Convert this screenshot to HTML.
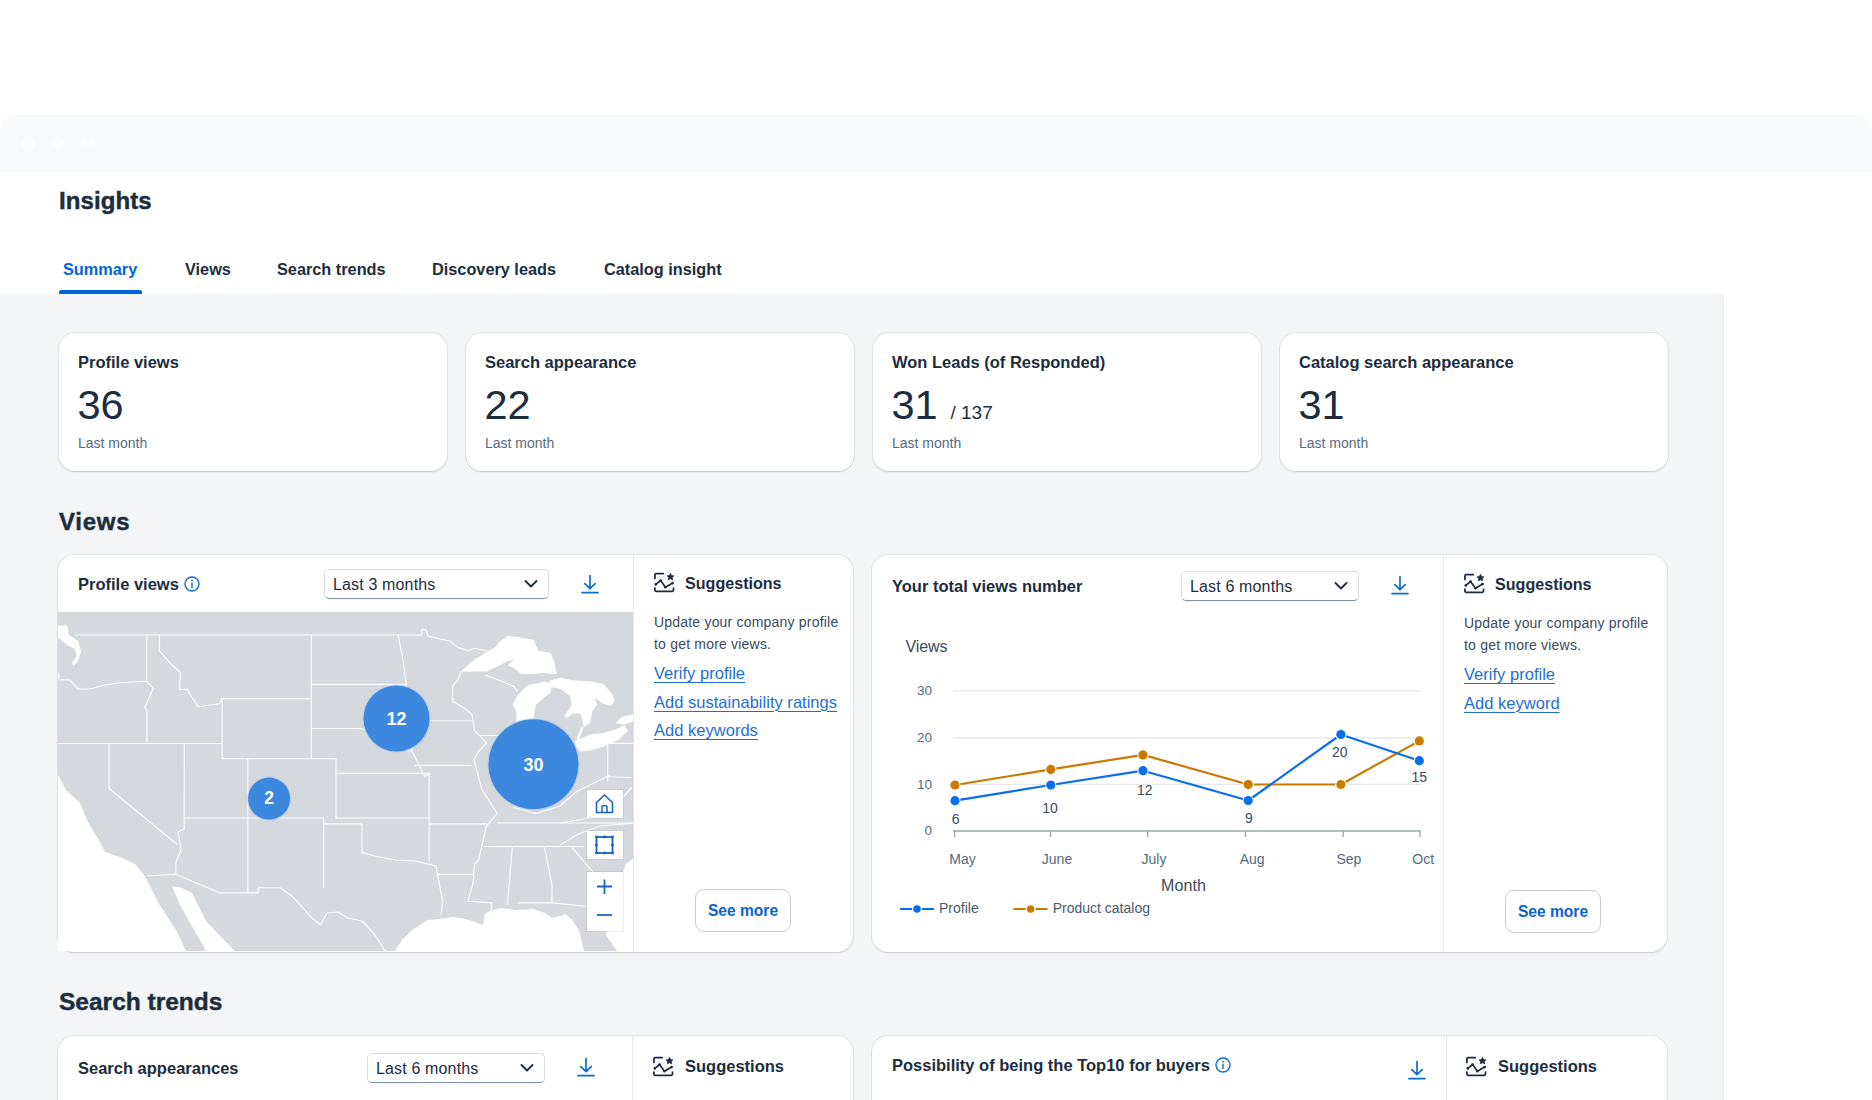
<!DOCTYPE html>
<html><head><meta charset="utf-8"><style>
html,body{margin:0;padding:0;}
body{width:1872px;height:1100px;overflow:hidden;position:relative;background:#fff;font-family:"Liberation Sans", sans-serif;}
.t{position:absolute;line-height:1;white-space:nowrap;}
</style></head><body>
<div style="position:absolute;left:0px;top:115px;width:1872px;height:57px;background:#f8f9fa;border-radius:17px 17px 0 0;"></div>
<div style="position:absolute;left:21px;top:136px;width:14px;height:14px;background:#fbfcfd;border-radius:50%;"></div>
<div style="position:absolute;left:51px;top:136px;width:14px;height:14px;background:#fbfcfd;border-radius:50%;"></div>
<div style="position:absolute;left:81px;top:136px;width:14px;height:14px;background:#fbfcfd;border-radius:50%;"></div>
<div class="t" style="left:59.0px;top:188.7px;font-size:24px;font-weight:700;color:#1d2d3e;letter-spacing:0.1px;-webkit-text-stroke:0.45px #1d2d3e;">Insights</div>
<div class="t" style="left:63.0px;top:260.7px;font-size:16.3px;font-weight:700;color:#0064d9;width:79px;">Summary</div>
<div class="t" style="left:185.0px;top:260.7px;font-size:16.3px;font-weight:700;color:#1d2d3e;width:49px;">Views</div>
<div class="t" style="left:277.0px;top:260.7px;font-size:16.3px;font-weight:700;color:#1d2d3e;width:112px;">Search trends</div>
<div class="t" style="left:432.0px;top:260.7px;font-size:16.3px;font-weight:700;color:#1d2d3e;width:129px;">Discovery leads</div>
<div class="t" style="left:604.0px;top:260.7px;font-size:16.3px;font-weight:700;color:#1d2d3e;width:123px;">Catalog insight</div>
<div style="position:absolute;left:59px;top:290px;width:83px;height:4px;background:#0064d9;border-radius:2px 2px 0 0;"></div>
<div style="position:absolute;left:0px;top:294px;width:1723px;height:806px;background:#f4f5f7;border-right:1px solid #eaecee;"></div>
<div style="position:absolute;left:58.5px;top:333px;width:388px;height:138px;background:#fff;border-radius:16px;box-shadow:0 0 0 1px rgba(0,0,0,0.06),0 1px 2px rgba(0,0,0,0.12);"></div>
<div class="t" style="left:78.0px;top:353.5px;font-size:16.5px;font-weight:700;color:#1d2d3e;">Profile views</div>
<div class="t" style="left:77.5px;top:384.1px;font-size:41.5px;font-weight:400;color:#1d2d3e;">36</div>
<div class="t" style="left:78.0px;top:435.6px;font-size:14px;font-weight:400;color:#556b82;">Last month</div>
<div style="position:absolute;left:465.5px;top:333px;width:388px;height:138px;background:#fff;border-radius:16px;box-shadow:0 0 0 1px rgba(0,0,0,0.06),0 1px 2px rgba(0,0,0,0.12);"></div>
<div class="t" style="left:485.0px;top:353.5px;font-size:16.5px;font-weight:700;color:#1d2d3e;">Search appearance</div>
<div class="t" style="left:484.5px;top:384.1px;font-size:41.5px;font-weight:400;color:#1d2d3e;">22</div>
<div class="t" style="left:485.0px;top:435.6px;font-size:14px;font-weight:400;color:#556b82;">Last month</div>
<div style="position:absolute;left:872.5px;top:333px;width:388px;height:138px;background:#fff;border-radius:16px;box-shadow:0 0 0 1px rgba(0,0,0,0.06),0 1px 2px rgba(0,0,0,0.12);"></div>
<div class="t" style="left:892.0px;top:353.5px;font-size:16.5px;font-weight:700;color:#1d2d3e;">Won Leads (of Responded)</div>
<div class="t" style="left:891.5px;top:384.1px;font-size:41.5px;font-weight:400;color:#1d2d3e;">31</div>
<div class="t" style="left:950.5px;top:403.4px;font-size:19px;font-weight:400;color:#1d2d3e;">/ 137</div>
<div class="t" style="left:892.0px;top:435.6px;font-size:14px;font-weight:400;color:#556b82;">Last month</div>
<div style="position:absolute;left:1279.5px;top:333px;width:388px;height:138px;background:#fff;border-radius:16px;box-shadow:0 0 0 1px rgba(0,0,0,0.06),0 1px 2px rgba(0,0,0,0.12);"></div>
<div class="t" style="left:1299.0px;top:353.5px;font-size:16.5px;font-weight:700;color:#1d2d3e;">Catalog search appearance</div>
<div class="t" style="left:1298.5px;top:384.1px;font-size:41.5px;font-weight:400;color:#1d2d3e;">31</div>
<div class="t" style="left:1299.0px;top:435.6px;font-size:14px;font-weight:400;color:#556b82;">Last month</div>
<div class="t" style="left:59.0px;top:509.7px;font-size:24px;font-weight:700;color:#1d2d3e;letter-spacing:0.75px;-webkit-text-stroke:0.45px #1d2d3e;">Views</div>
<div class="t" style="left:59.0px;top:990.3px;font-size:24.5px;font-weight:700;color:#1d2d3e;-webkit-text-stroke:0.45px #1d2d3e;">Search trends</div>
<div style="position:absolute;left:58px;top:555px;width:795px;height:397px;background:#fff;border-radius:16px;box-shadow:0 0 0 1px rgba(0,0,0,0.06),0 1px 2px rgba(0,0,0,0.12);overflow:hidden;"></div>
<div style="position:absolute;left:872px;top:555px;width:795px;height:397px;background:#fff;border-radius:16px;box-shadow:0 0 0 1px rgba(0,0,0,0.06),0 1px 2px rgba(0,0,0,0.12);"></div>
<div style="position:absolute;left:633px;top:555px;width:1px;height:397px;background:#e5e7ea;"></div>
<div style="position:absolute;left:1443px;top:555px;width:1px;height:397px;background:#e5e7ea;"></div>
<div class="t" style="left:78.0px;top:575.7px;font-size:16.5px;font-weight:700;color:#1d2d3e;">Profile views</div>
<svg style="position:absolute;left:182.5px;top:574.5px" width="18" height="18" viewBox="0 0 18 18"><circle cx="9" cy="9" r="7.0" fill="none" stroke="#0a6ed1" stroke-width="1.4"/><circle cx="9" cy="5.6" r="0.95" fill="#0a6ed1"/><rect x="8.3" y="7.6" width="1.4" height="5.4" fill="#0a6ed1"/></svg>
<div style="position:absolute;left:324px;top:569px;width:225px;height:30px;box-sizing:border-box;background:#fff;border:1px solid #d9dde2;border-bottom:1.5px solid #8396a8;border-radius:5px;box-shadow:0 1px 1px rgba(0,0,0,0.05)"></div>
<div class="t" style="left:333.0px;top:576.5px;font-size:16px;font-weight:400;color:#1d2d3e;letter-spacing:0.15px;">Last 3 months</div>
<svg style="position:absolute;left:524px;top:579px" width="14" height="10" viewBox="0 0 14 10"><path d="M1.5 2 L7 7.5 L12.5 2" fill="none" stroke="#1d2d3e" stroke-width="1.8" stroke-linecap="round" stroke-linejoin="round"/></svg>
<svg style="position:absolute;left:580px;top:574px" width="20" height="20" viewBox="0 0 20 20"><path d="M10 1.5 V14.5 M4.8 9.6 L10 14.6 L15.2 9.6" fill="none" stroke="#0a6ed1" stroke-width="1.7" stroke-linecap="round" stroke-linejoin="round"/><path d="M2 18.6 H18" stroke="#0a6ed1" stroke-width="1.7" stroke-linecap="round"/></svg>
<div class="t" style="left:892.0px;top:578.0px;font-size:16.5px;font-weight:700;color:#1d2d3e;">Your total views number</div>
<div style="position:absolute;left:1181px;top:571px;width:178px;height:30px;box-sizing:border-box;background:#fff;border:1px solid #d9dde2;border-bottom:1.5px solid #8396a8;border-radius:5px;box-shadow:0 1px 1px rgba(0,0,0,0.05)"></div>
<div class="t" style="left:1190.0px;top:578.5px;font-size:16px;font-weight:400;color:#1d2d3e;letter-spacing:0.15px;">Last 6 months</div>
<svg style="position:absolute;left:1334px;top:581px" width="14" height="10" viewBox="0 0 14 10"><path d="M1.5 2 L7 7.5 L12.5 2" fill="none" stroke="#1d2d3e" stroke-width="1.8" stroke-linecap="round" stroke-linejoin="round"/></svg>
<svg style="position:absolute;left:1390px;top:575px" width="20" height="20" viewBox="0 0 20 20"><path d="M10 1.5 V14.5 M4.8 9.6 L10 14.6 L15.2 9.6" fill="none" stroke="#0a6ed1" stroke-width="1.7" stroke-linecap="round" stroke-linejoin="round"/><path d="M2 18.6 H18" stroke="#0a6ed1" stroke-width="1.7" stroke-linecap="round"/></svg>
<svg style="position:absolute;left:654px;top:572px" width="22" height="22" viewBox="0 0 22 22"><path d="M0.9 6.4 V2.9 Q0.9 1.7 2.1 1.7 H9.2" fill="none" stroke="#1d2d3e" stroke-width="1.75" stroke-linecap="round"/><path d="M0.9 16 V18.1 Q0.9 19.3 2.1 19.3 H18.3 Q19.5 19.3 19.5 18.1 V16" fill="none" stroke="#1d2d3e" stroke-width="1.75" stroke-linecap="round"/><path d="M1.8 12.4 L6.6 8.5 L11.4 15.3 L18.6 11.1" fill="none" stroke="#1d2d3e" stroke-width="1.75" stroke-linecap="round" stroke-linejoin="round"/><circle cx="1.8" cy="12.4" r="1.3" fill="#1d2d3e"/><circle cx="6.6" cy="8.5" r="1.3" fill="#1d2d3e"/><circle cx="11.4" cy="15.3" r="1.3" fill="#1d2d3e"/><circle cx="18.6" cy="11.1" r="1.3" fill="#1d2d3e"/><path d="M16.5 1.4 L17.6 3.6 L19.9 3.9 L18.2 5.5 L18.6 7.8 L16.5 6.7 L14.4 7.8 L14.8 5.5 L13.1 3.9 L15.4 3.6 Z" fill="#1d2d3e" stroke="#1d2d3e" stroke-width="0.8" stroke-linejoin="round"/></svg>
<div class="t" style="left:685.0px;top:575.4px;font-size:16.1px;font-weight:700;color:#1d2d3e;">Suggestions</div>
<div class="t" style="left:654.0px;top:614.7px;font-size:14px;font-weight:400;color:#3a4a5c;letter-spacing:0.2px;">Update your company profile</div>
<div class="t" style="left:654.0px;top:636.5px;font-size:14px;font-weight:400;color:#3a4a5c;letter-spacing:0.2px;">to get more views.</div>
<div class="t" style="left:654px;top:665.0px;font-size:16.5px;letter-spacing:0.02px;color:#1f6fd0;text-decoration:underline;text-underline-offset:2.5px;text-decoration-thickness:1.2px;white-space:nowrap">Verify profile</div>
<div class="t" style="left:654px;top:693.7px;font-size:16.5px;letter-spacing:0.02px;color:#1f6fd0;text-decoration:underline;text-underline-offset:2.5px;text-decoration-thickness:1.2px;white-space:nowrap">Add sustainability ratings</div>
<div class="t" style="left:654px;top:722.4px;font-size:16.5px;letter-spacing:0.02px;color:#1f6fd0;text-decoration:underline;text-underline-offset:2.5px;text-decoration-thickness:1.2px;white-space:nowrap">Add keywords</div>
<svg style="position:absolute;left:1464px;top:573px" width="22" height="22" viewBox="0 0 22 22"><path d="M0.9 6.4 V2.9 Q0.9 1.7 2.1 1.7 H9.2" fill="none" stroke="#1d2d3e" stroke-width="1.75" stroke-linecap="round"/><path d="M0.9 16 V18.1 Q0.9 19.3 2.1 19.3 H18.3 Q19.5 19.3 19.5 18.1 V16" fill="none" stroke="#1d2d3e" stroke-width="1.75" stroke-linecap="round"/><path d="M1.8 12.4 L6.6 8.5 L11.4 15.3 L18.6 11.1" fill="none" stroke="#1d2d3e" stroke-width="1.75" stroke-linecap="round" stroke-linejoin="round"/><circle cx="1.8" cy="12.4" r="1.3" fill="#1d2d3e"/><circle cx="6.6" cy="8.5" r="1.3" fill="#1d2d3e"/><circle cx="11.4" cy="15.3" r="1.3" fill="#1d2d3e"/><circle cx="18.6" cy="11.1" r="1.3" fill="#1d2d3e"/><path d="M16.5 1.4 L17.6 3.6 L19.9 3.9 L18.2 5.5 L18.6 7.8 L16.5 6.7 L14.4 7.8 L14.8 5.5 L13.1 3.9 L15.4 3.6 Z" fill="#1d2d3e" stroke="#1d2d3e" stroke-width="0.8" stroke-linejoin="round"/></svg>
<div class="t" style="left:1495.0px;top:576.4px;font-size:16.1px;font-weight:700;color:#1d2d3e;">Suggestions</div>
<div class="t" style="left:1464.0px;top:615.7px;font-size:14px;font-weight:400;color:#3a4a5c;letter-spacing:0.2px;">Update your company profile</div>
<div class="t" style="left:1464.0px;top:637.5px;font-size:14px;font-weight:400;color:#3a4a5c;letter-spacing:0.2px;">to get more views.</div>
<div class="t" style="left:1464px;top:666.0px;font-size:16.5px;letter-spacing:0.02px;color:#1f6fd0;text-decoration:underline;text-underline-offset:2.5px;text-decoration-thickness:1.2px;white-space:nowrap">Verify profile</div>
<div class="t" style="left:1464px;top:694.7px;font-size:16.5px;letter-spacing:0.02px;color:#1f6fd0;text-decoration:underline;text-underline-offset:2.5px;text-decoration-thickness:1.2px;white-space:nowrap">Add keyword</div>
<div style="position:absolute;left:695px;top:889px;width:96px;height:43px;box-sizing:border-box;border:1px solid #c9ced4;border-radius:9px;background:#fff"></div>
<div class="t" style="left:743.0px;top:903.3px;font-size:15.6px;font-weight:700;color:#0a64d0;transform:translateX(-50%);">See more</div>
<div style="position:absolute;left:1505px;top:890px;width:96px;height:43px;box-sizing:border-box;border:1px solid #c9ced4;border-radius:9px;background:#fff"></div>
<div class="t" style="left:1553.0px;top:904.3px;font-size:15.6px;font-weight:700;color:#0a64d0;transform:translateX(-50%);">See more</div>
<div style="position:absolute;left:58px;top:1036px;width:795px;height:120px;background:#fff;border-radius:16px;box-shadow:0 0 0 1px rgba(0,0,0,0.06),0 1px 2px rgba(0,0,0,0.12);"></div>
<div style="position:absolute;left:872px;top:1036px;width:795px;height:120px;background:#fff;border-radius:16px;box-shadow:0 0 0 1px rgba(0,0,0,0.06),0 1px 2px rgba(0,0,0,0.12);"></div>
<div style="position:absolute;left:632px;top:1036px;width:1px;height:70px;background:#e5e7ea;"></div>
<div style="position:absolute;left:1446px;top:1036px;width:1px;height:70px;background:#e5e7ea;"></div>
<div class="t" style="left:78.0px;top:1059.6px;font-size:16.5px;font-weight:700;color:#1d2d3e;">Search appearances</div>
<div style="position:absolute;left:367px;top:1053px;width:178px;height:30px;box-sizing:border-box;background:#fff;border:1px solid #d9dde2;border-bottom:1.5px solid #8396a8;border-radius:5px;box-shadow:0 1px 1px rgba(0,0,0,0.05)"></div>
<div class="t" style="left:376.0px;top:1060.5px;font-size:16px;font-weight:400;color:#1d2d3e;letter-spacing:0.15px;">Last 6 months</div>
<svg style="position:absolute;left:520px;top:1063px" width="14" height="10" viewBox="0 0 14 10"><path d="M1.5 2 L7 7.5 L12.5 2" fill="none" stroke="#1d2d3e" stroke-width="1.8" stroke-linecap="round" stroke-linejoin="round"/></svg>
<svg style="position:absolute;left:576px;top:1057px" width="20" height="20" viewBox="0 0 20 20"><path d="M10 1.5 V14.5 M4.8 9.6 L10 14.6 L15.2 9.6" fill="none" stroke="#0a6ed1" stroke-width="1.7" stroke-linecap="round" stroke-linejoin="round"/><path d="M2 18.6 H18" stroke="#0a6ed1" stroke-width="1.7" stroke-linecap="round"/></svg>
<svg style="position:absolute;left:653px;top:1056px" width="22" height="22" viewBox="0 0 22 22"><path d="M0.9 6.4 V2.9 Q0.9 1.7 2.1 1.7 H9.2" fill="none" stroke="#1d2d3e" stroke-width="1.75" stroke-linecap="round"/><path d="M0.9 16 V18.1 Q0.9 19.3 2.1 19.3 H18.3 Q19.5 19.3 19.5 18.1 V16" fill="none" stroke="#1d2d3e" stroke-width="1.75" stroke-linecap="round"/><path d="M1.8 12.4 L6.6 8.5 L11.4 15.3 L18.6 11.1" fill="none" stroke="#1d2d3e" stroke-width="1.75" stroke-linecap="round" stroke-linejoin="round"/><circle cx="1.8" cy="12.4" r="1.3" fill="#1d2d3e"/><circle cx="6.6" cy="8.5" r="1.3" fill="#1d2d3e"/><circle cx="11.4" cy="15.3" r="1.3" fill="#1d2d3e"/><circle cx="18.6" cy="11.1" r="1.3" fill="#1d2d3e"/><path d="M16.5 1.4 L17.6 3.6 L19.9 3.9 L18.2 5.5 L18.6 7.8 L16.5 6.7 L14.4 7.8 L14.8 5.5 L13.1 3.9 L15.4 3.6 Z" fill="#1d2d3e" stroke="#1d2d3e" stroke-width="0.8" stroke-linejoin="round"/></svg>
<div class="t" style="left:685.0px;top:1058.0px;font-size:16.5px;font-weight:700;color:#1d2d3e;">Suggestions</div>
<div class="t" style="left:892.0px;top:1057.0px;font-size:16.5px;font-weight:700;color:#1d2d3e;">Possibility of being the Top10 for buyers</div>
<svg style="position:absolute;left:1214px;top:1056px" width="18" height="18" viewBox="0 0 18 18"><circle cx="9" cy="9" r="7.0" fill="none" stroke="#0a6ed1" stroke-width="1.4"/><circle cx="9" cy="5.6" r="0.95" fill="#0a6ed1"/><rect x="8.3" y="7.6" width="1.4" height="5.4" fill="#0a6ed1"/></svg>
<svg style="position:absolute;left:1407px;top:1060px" width="20" height="20" viewBox="0 0 20 20"><path d="M10 1.5 V14.5 M4.8 9.6 L10 14.6 L15.2 9.6" fill="none" stroke="#0a6ed1" stroke-width="1.7" stroke-linecap="round" stroke-linejoin="round"/><path d="M2 18.6 H18" stroke="#0a6ed1" stroke-width="1.7" stroke-linecap="round"/></svg>
<svg style="position:absolute;left:1466px;top:1056px" width="22" height="22" viewBox="0 0 22 22"><path d="M0.9 6.4 V2.9 Q0.9 1.7 2.1 1.7 H9.2" fill="none" stroke="#1d2d3e" stroke-width="1.75" stroke-linecap="round"/><path d="M0.9 16 V18.1 Q0.9 19.3 2.1 19.3 H18.3 Q19.5 19.3 19.5 18.1 V16" fill="none" stroke="#1d2d3e" stroke-width="1.75" stroke-linecap="round"/><path d="M1.8 12.4 L6.6 8.5 L11.4 15.3 L18.6 11.1" fill="none" stroke="#1d2d3e" stroke-width="1.75" stroke-linecap="round" stroke-linejoin="round"/><circle cx="1.8" cy="12.4" r="1.3" fill="#1d2d3e"/><circle cx="6.6" cy="8.5" r="1.3" fill="#1d2d3e"/><circle cx="11.4" cy="15.3" r="1.3" fill="#1d2d3e"/><circle cx="18.6" cy="11.1" r="1.3" fill="#1d2d3e"/><path d="M16.5 1.4 L17.6 3.6 L19.9 3.9 L18.2 5.5 L18.6 7.8 L16.5 6.7 L14.4 7.8 L14.8 5.5 L13.1 3.9 L15.4 3.6 Z" fill="#1d2d3e" stroke="#1d2d3e" stroke-width="0.8" stroke-linejoin="round"/></svg>
<div class="t" style="left:1498.0px;top:1058.0px;font-size:16.5px;font-weight:700;color:#1d2d3e;">Suggestions</div>
<svg style="position:absolute;left:0;top:0" width="1872" height="1100" viewBox="0 0 1872 1100"><line x1="953" y1="690.9" x2="1420.5" y2="690.9" stroke="#e4e6e9" stroke-width="1.2"/><line x1="953" y1="737.8" x2="1420.5" y2="737.8" stroke="#e4e6e9" stroke-width="1.2"/><line x1="953" y1="784.4" x2="1420.5" y2="784.4" stroke="#e4e6e9" stroke-width="1.2"/><line x1="953" y1="831" x2="1420.5" y2="831" stroke="#98aaa0" stroke-width="1.5"/><line x1="954.6" y1="831" x2="954.6" y2="837" stroke="#98aaa0" stroke-width="1.3"/><line x1="1050.5" y1="831" x2="1050.5" y2="837" stroke="#98aaa0" stroke-width="1.3"/><line x1="1147.7" y1="831" x2="1147.7" y2="837" stroke="#98aaa0" stroke-width="1.3"/><line x1="1245.5" y1="831" x2="1245.5" y2="837" stroke="#98aaa0" stroke-width="1.3"/><line x1="1343.2" y1="831" x2="1343.2" y2="837" stroke="#98aaa0" stroke-width="1.3"/><line x1="1420" y1="831" x2="1420" y2="837" stroke="#98aaa0" stroke-width="1.3"/><polyline points="955,785 1050.8,769.4 1143,754.9 1248.2,784.5 1340.9,784.5 1419.3,740.9" fill="none" stroke="#c87b00" stroke-width="2.2" stroke-linejoin="round"/><polyline points="955,800.7 1050.8,785 1143,770.7 1248.2,800.5 1340.9,734.5 1419.3,760.7" fill="none" stroke="#0a6cee" stroke-width="2.2" stroke-linejoin="round"/><circle cx="955" cy="785" r="5.6" fill="#fff"/><circle cx="955" cy="785" r="4.6" fill="#c87b00"/><circle cx="1050.8" cy="769.4" r="5.6" fill="#fff"/><circle cx="1050.8" cy="769.4" r="4.6" fill="#c87b00"/><circle cx="1143" cy="754.9" r="5.6" fill="#fff"/><circle cx="1143" cy="754.9" r="4.6" fill="#c87b00"/><circle cx="1248.2" cy="784.5" r="5.6" fill="#fff"/><circle cx="1248.2" cy="784.5" r="4.6" fill="#c87b00"/><circle cx="1340.9" cy="784.5" r="5.6" fill="#fff"/><circle cx="1340.9" cy="784.5" r="4.6" fill="#c87b00"/><circle cx="1419.3" cy="740.9" r="5.6" fill="#fff"/><circle cx="1419.3" cy="740.9" r="4.6" fill="#c87b00"/><circle cx="955" cy="800.7" r="5.6" fill="#fff"/><circle cx="955" cy="800.7" r="4.6" fill="#0a6cee"/><circle cx="1050.8" cy="785" r="5.6" fill="#fff"/><circle cx="1050.8" cy="785" r="4.6" fill="#0a6cee"/><circle cx="1143" cy="770.7" r="5.6" fill="#fff"/><circle cx="1143" cy="770.7" r="4.6" fill="#0a6cee"/><circle cx="1248.2" cy="800.5" r="5.6" fill="#fff"/><circle cx="1248.2" cy="800.5" r="4.6" fill="#0a6cee"/><circle cx="1340.9" cy="734.5" r="5.6" fill="#fff"/><circle cx="1340.9" cy="734.5" r="4.6" fill="#0a6cee"/><circle cx="1419.3" cy="760.7" r="5.6" fill="#fff"/><circle cx="1419.3" cy="760.7" r="4.6" fill="#0a6cee"/><line x1="900" y1="909" x2="934" y2="909" stroke="#0a6cee" stroke-width="2.2"/><circle cx="917" cy="909" r="5" fill="#fff"/><circle cx="917" cy="909" r="3.8" fill="#0a6cee"/><line x1="1013.5" y1="909" x2="1047.5" y2="909" stroke="#c87b00" stroke-width="2.2"/><circle cx="1030.6" cy="909" r="5" fill="#fff"/><circle cx="1030.6" cy="909" r="3.8" fill="#c87b00"/></svg>
<div class="t" style="left:880px;width:52px;text-align:right;top:684.3px;font-size:13.5px;color:#556b82">30</div>
<div class="t" style="left:880px;width:52px;text-align:right;top:731.2px;font-size:13.5px;color:#556b82">20</div>
<div class="t" style="left:880px;width:52px;text-align:right;top:777.8px;font-size:13.5px;color:#556b82">10</div>
<div class="t" style="left:880px;width:52px;text-align:right;top:824.4px;font-size:13.5px;color:#556b82">0</div>
<div class="t" style="left:905.5px;top:638.8px;font-size:16px;font-weight:400;color:#3a4a5c;letter-spacing:-0.1px;">Views</div>
<div class="t" style="left:962.5px;top:852.1px;font-size:14px;font-weight:400;color:#556b82;transform:translateX(-50%);">May</div>
<div class="t" style="left:1057.0px;top:852.1px;font-size:14px;font-weight:400;color:#556b82;transform:translateX(-50%);">June</div>
<div class="t" style="left:1154.0px;top:852.1px;font-size:14px;font-weight:400;color:#556b82;transform:translateX(-50%);">July</div>
<div class="t" style="left:1252.2px;top:852.1px;font-size:14px;font-weight:400;color:#556b82;transform:translateX(-50%);">Aug</div>
<div class="t" style="left:1348.9px;top:852.1px;font-size:14px;font-weight:400;color:#556b82;transform:translateX(-50%);">Sep</div>
<div class="t" style="left:1423.2px;top:852.1px;font-size:14px;font-weight:400;color:#556b82;transform:translateX(-50%);">Oct</div>
<div class="t" style="left:955.6px;top:811.6px;font-size:14px;font-weight:400;color:#3a4a5c;transform:translateX(-50%);">6</div>
<div class="t" style="left:1050.0px;top:801.4px;font-size:14px;font-weight:400;color:#3a4a5c;transform:translateX(-50%);">10</div>
<div class="t" style="left:1144.7px;top:783.1px;font-size:14px;font-weight:400;color:#3a4a5c;transform:translateX(-50%);">12</div>
<div class="t" style="left:1248.9px;top:810.6px;font-size:14px;font-weight:400;color:#3a4a5c;transform:translateX(-50%);">9</div>
<div class="t" style="left:1339.8px;top:745.4px;font-size:14px;font-weight:400;color:#3a4a5c;transform:translateX(-50%);">20</div>
<div class="t" style="left:1419.3px;top:769.7px;font-size:14px;font-weight:400;color:#3a4a5c;transform:translateX(-50%);">15</div>
<div class="t" style="left:1161.0px;top:877.9px;font-size:16px;font-weight:400;color:#3a4a5c;letter-spacing:0.1px;">Month</div>
<div class="t" style="left:939.0px;top:901.3px;font-size:14px;font-weight:400;color:#4a5a6c;">Profile</div>
<div class="t" style="left:1052.7px;top:901.3px;font-size:14px;font-weight:400;color:#4a5a6c;">Product catalog</div>
<svg style="position:absolute;left:0;top:0" width="1872" height="1100" viewBox="0 0 1872 1100"><defs><clipPath id="mc"><rect x="58" y="612" width="575" height="339"/></clipPath></defs><g clip-path="url(#mc)"><rect x="58" y="612" width="575" height="339" fill="#d5d8dc"/><path fill="#ffffff" d="M50 770 L58 775 L66 790 L80 803 L88 822 L100 842 L105 852 L120 857 L135 864 L145 876 L152 890 L159 904 L167 916 L176 930 L186 951 L50 951 Z"/><path fill="#ffffff" d="M172 886 L182 888 L192 893 L198 905 L206 921 L220 936 L235 951 L206 951 L197 935 L189 921 L180 905 Z"/><path fill="#ffffff" d="M395 951 L402 940 L411 931 L420 925 L428 920 L440 919 L452 917 L462 918 L472 921 L483 925 L485 914 L490 911 L500 908 L515 910 L533 909 L545 913 L552 918 L560 916 L566 914 L572 920 L579 930 L584 951 Z"/><path fill="#ffffff" d="M634 858 L626 864 L620 880 L612 905 L606 935 L617 951 L634 951 Z"/><path fill="#ffffff" d="M58 625.5 L67.3 625.5 L68.8 634.8 L78.1 641 L81.2 651.8 L78.1 661.1 L73.5 665.8 L71.9 662.7 L76.6 656.5 L75 648.7 L67.3 645.6 L61.1 639.4 L58 637.9 Z"/><path fill="#ffffff" d="M58 672 L60 676 L58 680 Z"/><path fill="#ffffff" d="M461.0 671.6 L474.5 659.4 L486.8 652.0 L495.4 647.1 L499.1 642.2 L507.7 636.0 L518.7 637.3 L533.5 639.7 L538.4 650.8 L550.6 653.2 L554.3 661.8 L556.8 674.1 L551.9 674.1 L543.3 672.9 L531.0 674.1 L521.2 674.1 L513.8 668.0 L507.7 665.5 L513.8 659.4 L506.5 661.8 L499.1 665.5 L486.8 671.6 L477.0 671.6 Z"/><path fill="#ffffff" d="M512.6 704.8 L518.7 693.7 L528.6 685.1 L545.7 681.5 L551.9 683.9 L550.6 692.5 L543.3 698.6 L535.9 704.8 L533.5 718.3 L532 735 L518 735 L516.3 719.5 L516.3 710.9 Z"/><path fill="#ffffff" d="M549 681 L560.5 677.8 L572.7 680.2 L591.2 681.5 L603.4 683.9 L612.0 693.7 L614.5 701.1 L610.8 706.0 L603.4 703.6 L594.8 698.6 L597.3 704.8 L592.4 710.9 L589.9 723.2 L583.8 726.9 L582.6 720.7 L580.1 713.4 L572.7 713.4 L566.6 718.3 L564.2 715.8 L571.5 706.0 L570.3 696.2 L560.5 688.8 L550 687 Z"/><path d="M582.6 726.9 L577.7 739.2" stroke="#fff" stroke-width="2.2"/><path fill="#ffffff" d="M575.2 740.4 L591.2 734.2 L603.4 733.0 L615.7 729.3 L624.3 725.6 L628.0 730.6 L619.4 739.2 L603.4 746.5 L591.2 750.2 L580.1 751.4 L575.2 745.3 Z"/><path fill="#ffffff" d="M615.7 723.2 L621.8 717.1 L631.7 714.6 L634 714 L634 721 L624.3 724.4 Z"/><path fill="none" stroke="#ffffff" stroke-opacity="0.92" stroke-width="1.15" stroke-linejoin="round" stroke-linecap="round" d="M75 635 L421.7 635 L421.7 629 L426 630 L428 636 L440 639 L450 641 L457.4 647.1 L468.4 650.8 L474.5 648.3 L486.8 650.8"/><path fill="none" stroke="#ffffff" stroke-opacity="0.92" stroke-width="1.15" stroke-linejoin="round" stroke-linecap="round" d="M146.6 635 L146.6 681.3"/><path fill="none" stroke="#ffffff" stroke-opacity="0.92" stroke-width="1.15" stroke-linejoin="round" stroke-linecap="round" d="M60 679.7 L70 680 L78 689 L90 689 L105 685 L120 682.8 L146.6 681.3 L153.3 688.2 L144.8 707.6 L147 710.7 L147 743.5"/><path fill="none" stroke="#ffffff" stroke-opacity="0.92" stroke-width="1.15" stroke-linejoin="round" stroke-linecap="round" d="M159.5 635 L159.5 651 L170 663 L180.4 672.7 L179.6 689.8 L186.6 689 L198.2 706.8 L219.1 703.7 L222.2 698.6"/><path fill="none" stroke="#ffffff" stroke-opacity="0.92" stroke-width="1.15" stroke-linejoin="round" stroke-linecap="round" d="M222.2 698.6 L311.3 698.6"/><path fill="none" stroke="#ffffff" stroke-opacity="0.92" stroke-width="1.15" stroke-linejoin="round" stroke-linecap="round" d="M222.2 698.6 L222.2 758.7"/><path fill="none" stroke="#ffffff" stroke-opacity="0.92" stroke-width="1.15" stroke-linejoin="round" stroke-linecap="round" d="M311.3 635 L311.3 758.7"/><path fill="none" stroke="#ffffff" stroke-opacity="0.92" stroke-width="1.15" stroke-linejoin="round" stroke-linecap="round" d="M58 743.5 L222.2 743.5"/><path fill="none" stroke="#ffffff" stroke-opacity="0.92" stroke-width="1.15" stroke-linejoin="round" stroke-linecap="round" d="M109.1 743.5 L109.1 788.5 L176.6 844"/><path fill="none" stroke="#ffffff" stroke-opacity="0.92" stroke-width="1.15" stroke-linejoin="round" stroke-linecap="round" d="M184.3 743.5 L184.2 828.9 L178 832 L181 850 L176 862 L175.7 874.3"/><path fill="none" stroke="#ffffff" stroke-opacity="0.92" stroke-width="1.15" stroke-linejoin="round" stroke-linecap="round" d="M147.2 876 L175.7 874.3 L219.5 892.8 L258.2 892.8 L258.2 887.7 L280 887.7 L292 896 L300 904.6 L312 918 L320.4 924.8 L327.1 913 L338 912 L348 918 L362 921 L375 935 L385 951"/><path fill="none" stroke="#ffffff" stroke-opacity="0.92" stroke-width="1.15" stroke-linejoin="round" stroke-linecap="round" d="M222.2 758.7 L336.1 758.7 L336.1 773.4"/><path fill="none" stroke="#ffffff" stroke-opacity="0.92" stroke-width="1.15" stroke-linejoin="round" stroke-linecap="round" d="M247.8 758.7 L247.8 892.8"/><path fill="none" stroke="#ffffff" stroke-opacity="0.92" stroke-width="1.15" stroke-linejoin="round" stroke-linecap="round" d="M184.2 818 L323.8 818 L323.8 887.7"/><path fill="none" stroke="#ffffff" stroke-opacity="0.92" stroke-width="1.15" stroke-linejoin="round" stroke-linecap="round" d="M323.8 823.8 L361.9 823.8"/><path fill="none" stroke="#ffffff" stroke-opacity="0.92" stroke-width="1.15" stroke-linejoin="round" stroke-linecap="round" d="M336.1 773.4 L429.1 773.4"/><path fill="none" stroke="#ffffff" stroke-opacity="0.92" stroke-width="1.15" stroke-linejoin="round" stroke-linecap="round" d="M336.1 773.4 L336.1 818"/><path fill="none" stroke="#ffffff" stroke-opacity="0.92" stroke-width="1.15" stroke-linejoin="round" stroke-linecap="round" d="M311.3 684.4 L406 684.4"/><path fill="none" stroke="#ffffff" stroke-opacity="0.92" stroke-width="1.15" stroke-linejoin="round" stroke-linecap="round" d="M311.3 728.5 L360 728.5 L372 731 L380 736 L390 745 L412.2 751.4 L424.8 776.5 L429.1 773.4"/><path fill="none" stroke="#ffffff" stroke-opacity="0.92" stroke-width="1.15" stroke-linejoin="round" stroke-linecap="round" d="M398.1 635 L403 660 L406 682.2 L408 704 L412.2 751.4"/><path fill="none" stroke="#ffffff" stroke-opacity="0.92" stroke-width="1.15" stroke-linejoin="round" stroke-linecap="round" d="M406 720.7 L472 720.7"/><path fill="none" stroke="#ffffff" stroke-opacity="0.92" stroke-width="1.15" stroke-linejoin="round" stroke-linecap="round" d="M336.1 818 L429.1 818"/><path fill="none" stroke="#ffffff" stroke-opacity="0.92" stroke-width="1.15" stroke-linejoin="round" stroke-linecap="round" d="M429.1 773.4 L429.1 860.8"/><path fill="none" stroke="#ffffff" stroke-opacity="0.92" stroke-width="1.15" stroke-linejoin="round" stroke-linecap="round" d="M361.9 823.8 L361.9 852.4 L375 856 L395 860 L415 861 L435.9 865.9 L442.6 901.2 L441 914.6"/><path fill="none" stroke="#ffffff" stroke-opacity="0.92" stroke-width="1.15" stroke-linejoin="round" stroke-linecap="round" d="M429.1 823.8 L486.3 823.8"/><path fill="none" stroke="#ffffff" stroke-opacity="0.92" stroke-width="1.15" stroke-linejoin="round" stroke-linecap="round" d="M437.5 874.3 L472.9 874.3"/><path fill="none" stroke="#ffffff" stroke-opacity="0.92" stroke-width="1.15" stroke-linejoin="round" stroke-linecap="round" d="M461 671.6 L458.6 679 L452.5 686.4 L452.5 701.1 L464.7 708.5 L472.1 714.6 L474.5 730.6 L481.9 737.9 L486.8 742.8"/><path fill="none" stroke="#ffffff" stroke-opacity="0.92" stroke-width="1.15" stroke-linejoin="round" stroke-linecap="round" d="M415.4 765.5 L471 765.5"/><path fill="none" stroke="#ffffff" stroke-opacity="0.92" stroke-width="1.15" stroke-linejoin="round" stroke-linecap="round" d="M480.7 735.5 L516 735.5"/><path fill="none" stroke="#ffffff" stroke-opacity="0.92" stroke-width="1.15" stroke-linejoin="round" stroke-linecap="round" d="M485.6 675.3 L499.1 680.2 L513.8 686.4 L517.5 691.3"/><path fill="none" stroke="#ffffff" stroke-opacity="0.92" stroke-width="1.15" stroke-linejoin="round" stroke-linecap="round" d="M486.8 742.8 L478 752 L474 760 L481.7 789 L497.2 813.6 L486.4 826 L478.6 860 L474.5 864.2 L472.9 884.4 L467.8 901.2 L491.4 902.9 L491.4 911.3"/><path fill="none" stroke="#ffffff" stroke-opacity="0.92" stroke-width="1.15" stroke-linejoin="round" stroke-linecap="round" d="M513 736 L513 790 L514.2 807.5"/><path fill="none" stroke="#ffffff" stroke-opacity="0.92" stroke-width="1.15" stroke-linejoin="round" stroke-linecap="round" d="M514.2 807.5 L535.8 813.6 L560 806 L576 792 L594.6 782.7 L610 775"/><path fill="none" stroke="#ffffff" stroke-opacity="0.92" stroke-width="1.15" stroke-linejoin="round" stroke-linecap="round" d="M607.7 741 L607.7 781"/><path fill="none" stroke="#ffffff" stroke-opacity="0.92" stroke-width="1.15" stroke-linejoin="round" stroke-linecap="round" d="M610 743.3 L634 743.3"/><path fill="none" stroke="#ffffff" stroke-opacity="0.92" stroke-width="1.15" stroke-linejoin="round" stroke-linecap="round" d="M497.2 823 L634 823"/><path fill="none" stroke="#ffffff" stroke-opacity="0.92" stroke-width="1.15" stroke-linejoin="round" stroke-linecap="round" d="M484.6 846.5 L583.9 846.5"/><path fill="none" stroke="#ffffff" stroke-opacity="0.92" stroke-width="1.15" stroke-linejoin="round" stroke-linecap="round" d="M512.4 846.5 L507.3 904.5"/><path fill="none" stroke="#ffffff" stroke-opacity="0.92" stroke-width="1.15" stroke-linejoin="round" stroke-linecap="round" d="M544.3 846.5 L551.9 884.4 L551.9 902.9"/><path fill="none" stroke="#ffffff" stroke-opacity="0.92" stroke-width="1.15" stroke-linejoin="round" stroke-linecap="round" d="M518.3 902.9 L551.9 902.9 L585.5 906.2"/><path fill="none" stroke="#ffffff" stroke-opacity="0.92" stroke-width="1.15" stroke-linejoin="round" stroke-linecap="round" d="M572 847.4 L588.9 867.5 L600 880"/><path fill="none" stroke="#ffffff" stroke-opacity="0.92" stroke-width="1.15" stroke-linejoin="round" stroke-linecap="round" d="M560.6 844.6 L579 833.7 L600 826 L634 823"/><path fill="none" stroke="#ffffff" stroke-opacity="0.92" stroke-width="1.15" stroke-linejoin="round" stroke-linecap="round" d="M631.7 787.4 L622.4 798.2 L610 813.6 L590 818 L560 823"/><path fill="none" stroke="#ffffff" stroke-opacity="0.92" stroke-width="1.15" stroke-linejoin="round" stroke-linecap="round" d="M607.6 776.7 L631 777.5"/><path fill="none" stroke="#ffffff" stroke-opacity="0.92" stroke-width="1.15" stroke-linejoin="round" stroke-linecap="round" d="M58 914.6 L72 930 L82 951"/></g><circle cx="396.5" cy="718.4" r="34" fill="#a8c8ee" opacity="0.6"/><circle cx="396.5" cy="718.4" r="33" fill="#3d88df"/><circle cx="269.1" cy="798.6" r="22" fill="#a8c8ee" opacity="0.6"/><circle cx="269.1" cy="798.6" r="21" fill="#3d88df"/><circle cx="533.5" cy="764.2" r="46" fill="#a8c8ee" opacity="0.6"/><circle cx="533.5" cy="764.2" r="45" fill="#3d88df"/></svg>
<div class="t" style="left:396.5px;top:709.8px;font-size:18px;font-weight:700;color:#ffffff;transform:translateX(-50%);">12</div>
<div class="t" style="left:269.1px;top:790.4px;font-size:17.5px;font-weight:700;color:#ffffff;transform:translateX(-50%);">2</div>
<div class="t" style="left:533.5px;top:755.6px;font-size:18px;font-weight:700;color:#ffffff;transform:translateX(-50%);">30</div>
<div style="position:absolute;left:587px;top:790px;width:36px;height:28px;background:#fff;box-shadow:0 0 0 1px rgba(0,0,0,0.06)"></div>
<div style="position:absolute;left:587px;top:831px;width:36px;height:28px;background:#fff;box-shadow:0 0 0 1px rgba(0,0,0,0.06)"></div>
<div style="position:absolute;left:587px;top:872px;width:36px;height:59px;background:#fff;box-shadow:0 0 0 1px rgba(0,0,0,0.06)"></div>
<svg style="position:absolute;left:0;top:0" width="1872" height="1100" viewBox="0 0 1872 1100"><path d="M596.5 812.5 V802.5 L604.5 795 L612.5 802.5 V812.5 Z" fill="none" stroke="#1a63c4" stroke-width="1.6" stroke-linejoin="round"/><path d="M602 812.5 V807 Q602 805.5 604.5 805.5 Q607 805.5 607 807 V812.5" fill="none" stroke="#1a63c4" stroke-width="1.5"/><rect x="596.5" y="837" width="16" height="16" fill="none" stroke="#1a63c4" stroke-width="1.8"/><circle cx="596.5" cy="837" r="1.4" fill="#1a63c4"/><circle cx="612.5" cy="837" r="1.4" fill="#1a63c4"/><circle cx="596.5" cy="853" r="1.4" fill="#1a63c4"/><circle cx="612.5" cy="853" r="1.4" fill="#1a63c4"/><circle cx="604.5" cy="837" r="1.4" fill="#1a63c4"/><circle cx="604.5" cy="853" r="1.4" fill="#1a63c4"/><circle cx="596.5" cy="845" r="1.4" fill="#1a63c4"/><circle cx="612.5" cy="845" r="1.4" fill="#1a63c4"/><path d="M604.5 879.5 V894 M597 886.5 H612" stroke="#1a63c4" stroke-width="1.8"/><path d="M597 915 H612" stroke="#1a63c4" stroke-width="1.8"/></svg>
</body></html>
